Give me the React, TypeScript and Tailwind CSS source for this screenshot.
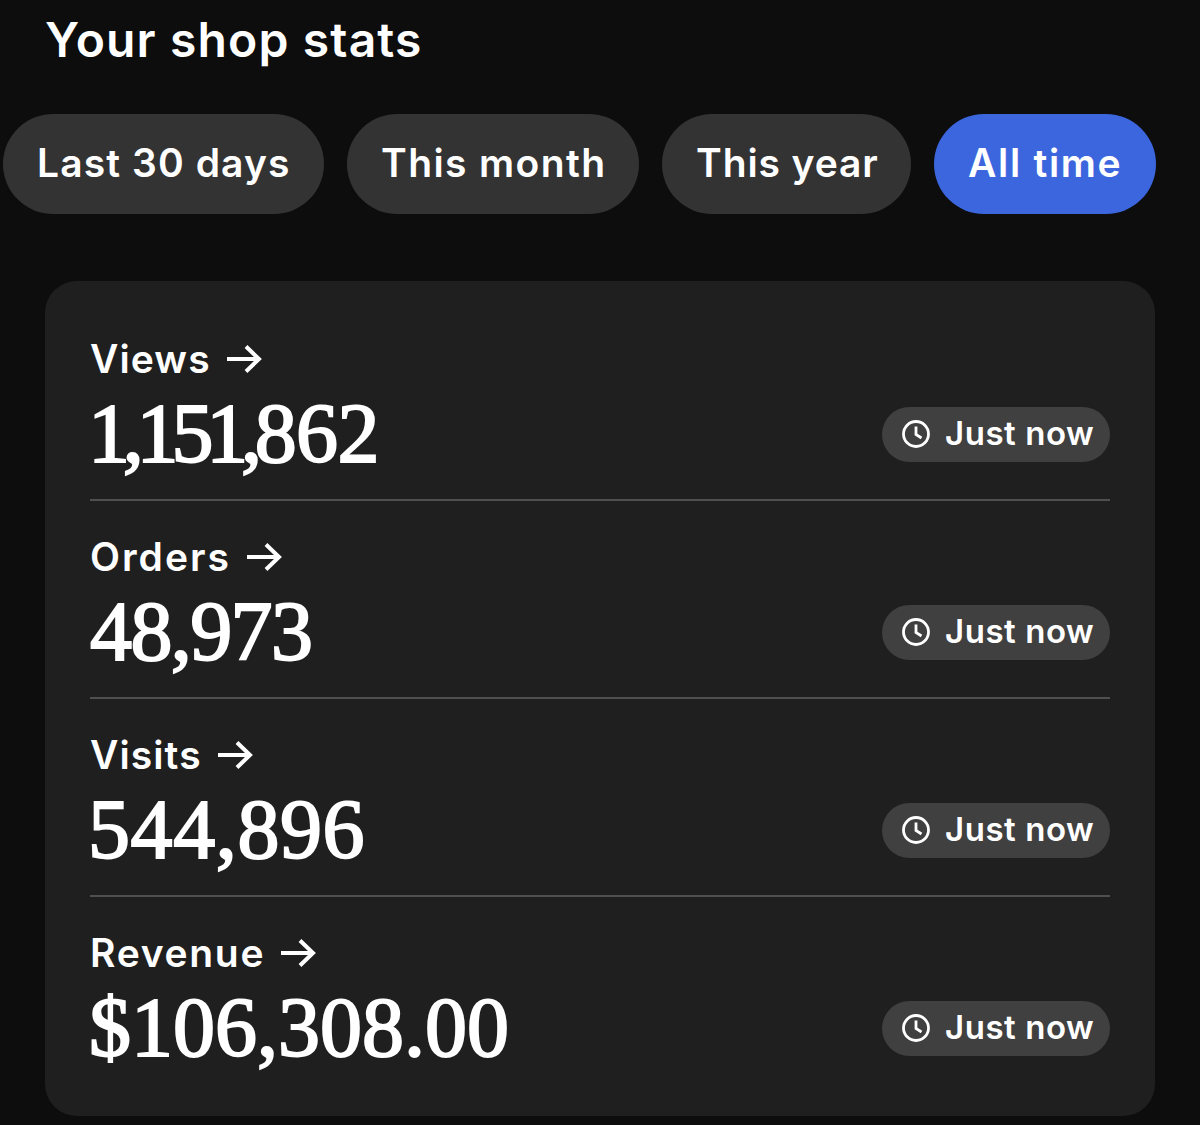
import React from "react";

function Arrow() {
  return (
    <svg width="36" height="36" viewBox="0 0 36 36" fill="none" stroke="white" strokeWidth="4" className="ml-[15px]">
      <path d="M1 18H33M20 5.5L33 18L20 30.5" />
    </svg>
  );
}

function Clock() {
  return (
    <svg width="30" height="30" viewBox="0 0 30 30" fill="none" stroke="white" strokeWidth="2.8" className="shrink-0">
      <circle cx="15" cy="15" r="12.5" />
      <path d="M15 7.5V15.5L20.5 19" />
    </svg>
  );
}

const stats = [
  { label: "Views", lead: "1,151,", value: "862", lt: "tracking-[1.1px]", track: "tracking-[-0.7px]", ml: "-ml-[2px]" },
  { label: "Orders", lead: "", value: "48,973", lt: "tracking-[2px]", track: "tracking-[-1.6px]", ml: "ml-0" },
  { label: "Visits", lead: "", value: "544,896", lt: "tracking-[1.1px]", track: "tracking-[0.6px]", ml: "-ml-[2px]" },
  { label: "Revenue", lead: "", value: "$106,308.00", lt: "tracking-[1.7px]", track: "tracking-[0px]", ml: "-ml-[1px]" },
];

const tabs = [
  { t: "Last 30 days", c: "w-[321px] bg-[#333333] tracking-[1.1px]" },
  { t: "This month", c: "w-[292px] bg-[#333333] tracking-[1.4px]" },
  { t: "This year", c: "w-[249px] bg-[#333333] tracking-[0.9px]" },
  { t: "All time", c: "w-[222px] bg-[#3c66de] tracking-[1.7px]" },
];

export default function App() {
  return (
    <div className="w-[1200px] h-[1125px] overflow-hidden bg-[#0d0d0d] text-white font-['Inter','Liberation_Sans',sans-serif]">
      <h1 className="pl-[45px] pt-[12px] h-[114px] text-[48px] leading-[56px] font-semibold tracking-[1.15px]">Your shop stats</h1>
      <div className="flex gap-[23px] pl-[3px]">
        {tabs.map(({ t, c }) => (
          <div key={t} className={"h-[100px] pl-[34px] pb-[2px] flex items-center rounded-[50px] text-[39px] font-semibold whitespace-nowrap " + c}>{t}</div>
        ))}
      </div>
      <div className="mt-[67px] ml-[45px] w-[1110px] h-[835px] rounded-[32px] bg-[#1f1f1f] px-[45px] pt-[48px]">
        {stats.map(({ label, lead, value, lt, track, ml }, i) => (
          <div key={label} className="h-[198px]">
            <div className={"h-[172px] " + (i < 3 ? "border-b-2 border-[#4f4f4f]" : "")}>
              <div className={"flex items-center h-[60px] text-[39px] font-semibold " + lt}>{label}<Arrow /></div>
              <div className="flex items-center justify-between h-[90px]">
                <span className={"font-['Liberation_Serif',serif] text-[84px] leading-[90px] [-webkit-text-stroke:2px_white] " + ml}>
                  {lead ? <span className="tracking-[-7.2px]">{lead}</span> : null}
                  <span className={track}>{value}</span>
                </span>
                <div className="flex items-center h-[55px] w-[228px] rounded-[28px] bg-[#404040] pl-[19px] gap-[14px] text-[33px] font-semibold tracking-[0.55px] whitespace-nowrap">
                  <Clock />Just now
                </div>
              </div>
            </div>
          </div>
        ))}
      </div>
    </div>
  );
}
